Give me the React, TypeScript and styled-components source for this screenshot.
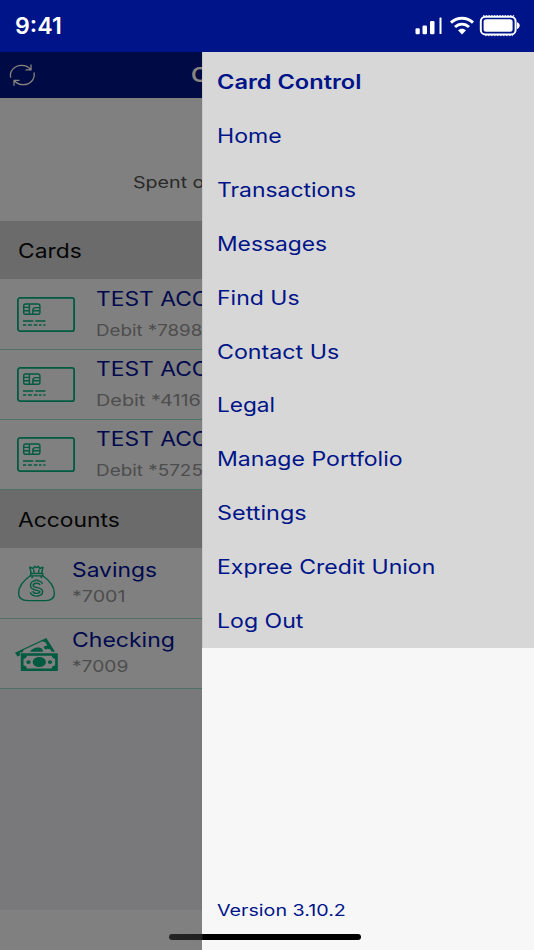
import React from 'react';
import styled, { createGlobalStyle } from 'styled-components';

const GlobalStyle = createGlobalStyle`
  * { box-sizing: border-box; }
  body { margin: 0; font-family: Inter, Roboto, sans-serif; }
`;

const Screen = styled.div`
  position: relative;
  display: flex;
  flex-direction: column;
  width: 534px;
  height: 950px;
  overflow: hidden;
  background: #808080;
`;

const StatusBar = styled.header`
  display: flex;
  align-items: center;
  justify-content: space-between;
  height: 52px;
  flex: none;
  padding: 0 14px 0 15px;
  background: #001489;
`;

const Label = styled.span<{
  $size: number;
  $color: string;
  $stretch?: number;
  $weight?: number;
}>`
  display: block;
  width: max-content;
  white-space: nowrap;
  font-size: ${(p) => p.$size}px;
  line-height: 24px;
  font-weight: ${(p) => p.$weight ?? 400};
  color: ${(p) => p.$color};
  transform: scaleX(${(p) => p.$stretch ?? 1.17});
  transform-origin: left center;
`;

const StatusIcons = styled.svg`
  display: block;
  width: 106px;
  height: 24px;
`;

const Main = styled.div`
  display: flex;
  flex: 1;
  min-height: 0;
`;

const Page = styled.main`
  display: flex;
  flex-direction: column;
  width: 202px;
  flex: none;
  overflow: hidden;
  background: #808080;
`;

const NavBar = styled.div`
  display: flex;
  align-items: center;
  gap: 155px;
  height: 46px;
  flex: none;
  padding-left: 9px;
  background: #000a45;
`;

const RefreshIcon = styled.svg`
  width: 27px;
  height: 24px;
  flex: none;
`;

const Summary = styled.section`
  height: 123px;
  flex: none;
  padding: 72px 0 0 133px;
`;

const SectionHeader = styled.h2`
  display: flex;
  align-items: center;
  margin: 0;
  height: 58px;
  flex: none;
  padding: 2px 0 0 17.5px;
  background: #6b6b6b;
`;

const Row = styled.div<{ $tight?: boolean }>`
  display: flex;
  flex: none;
  height: 70px;
  padding: ${(p) => (p.$tight ? 9 : 7)}px 0 0 ${(p) => (p.$tight ? 15 : 17)}px;
  gap: ${(p) => (p.$tight ? 13 : 21)}px;
  border-bottom: 1px solid #4d7164;

  h2 + & {
    height: 71px;
    padding-top: ${(p) => (p.$tight ? 10 : 8)}px;
  }
`;

const RowText = styled.div<{ $gap: number }>`
  display: flex;
  flex-direction: column;
  gap: ${(p) => p.$gap}px;
`;

const RowIcon = styled.svg<{ $w: number; $top: number; $h: number }>`
  width: ${(p) => p.$w}px;
  height: ${(p) => p.$h}px;
  margin-top: ${(p) => p.$top}px;
  flex: none;
  overflow: visible;
`;

const Filler = styled.div`
  height: 221px;
  flex: none;
  background: #79797b;
`;

const Drawer = styled.aside`
  display: flex;
  flex-direction: column;
  flex: 1;
  background: #f7f7f7;
`;

const Menu = styled.nav`
  display: flex;
  flex-direction: column;
  height: 596px;
  padding: 3px 0 0 14px;
  background: #d7d7d7;
  border-left: 1px solid #c9c9c9;
`;

const MenuItem = styled.a<{ $first?: boolean }>`
  display: flex;
  align-items: center;
  height: ${(p) => (p.$first ? 54.2 : 53.86)}px;
  flex: none;
`;

const Version = styled.div`
  padding: 250px 0 0 15px;
`;

const HomeIndicator = styled.div`
  position: absolute;
  left: 169px;
  bottom: 10px;
  width: 192px;
  height: 6px;
  border-radius: 3px;
  background: linear-gradient(90deg, #242424 0, #202020 33px, #000 34px);
`;

const CardIcon = () => (
  <RowIcon $w={58} $h={35} $top={10} viewBox="0 0 58 35" fill="none" stroke="#005b40">
    <rect x="0.9" y="0.9" width="56.2" height="33.2" rx="2.2" strokeWidth="1.8" />
    <g strokeWidth="1.4">
      <rect x="6.7" y="7" width="16.2" height="10.2" rx="1.8" />
      <path d="M7 10.4h5.4M7 13.8h5.4M12.4 7v10M15.8 17v-3.4c0-1.9.9-3 2.7-3h4.1M16 13.8h6.5" />
    </g>
    <path d="M6 24h10.3M18.3 24h10.2" strokeWidth="1.7" />
    <path d="M6 28h3.2M11 28h3.8M16.8 28h3.6M22 28h2.5M26.3 28h2.2" strokeWidth="1.7" />
  </RowIcon>
);

const MoneyBagIcon = () => (
  <RowIcon $w={44} $h={37} $top={7} viewBox="0 0 44 37" fill="none" stroke="#005b40" strokeWidth="1.4" strokeLinejoin="round">
    <path d="M15.8 10.2C9.5 14.7 3.6 21.5 3.6 28.2c0 5.3 3.6 7.4 9.2 7.4h17.8c5.6 0 8.8-2.4 8.8-7.4 0-7.1-5.8-13.5-12.2-18" />
    <path d="m16.3 8.5-1.6-6.3 3.5 1.3 1.5-2.2 1.8 1.2 1.8-1.2 1.5 2.2 3.1-1.3-1.2 6.3zM15.7 8.5h12v2.4h-12zM18.7 4.5l.5 4M24 4.5l-.5 4M17.7 11l-1 2.2M25.6 11l1.2 2.2" />
    <path d="M26.3 19.4c-.8-1.8-2.5-2.5-4.7-2.5-3 0-4.8 1.3-4.8 3.5 0 5 9.5 2.3 9.5 6.2 0 2.2-2 3.1-4.5 3.1-2.7 0-4.5-.9-5.3-3M21.5 14.5v3M21.5 29.2v2.5" strokeWidth="4" />
    <path d="M26.3 19.4c-.8-1.8-2.5-2.5-4.7-2.5-3 0-4.8 1.3-4.8 3.5 0 5 9.5 2.3 9.5 6.2 0 2.2-2 3.1-4.5 3.1-2.7 0-4.5-.9-5.3-3M21.5 15.5v2M21.5 29.2v1.5" stroke="#808080" strokeWidth="1.3" />
  </RowIcon>
);

const CashIcon = () => (
  <RowIcon $w={44} $h={35} $top={9.5} viewBox="0 0 44 35">
    <path d="M0 14.8 31.3 0 40 13.8h-3.2l-2-2.8c-1.3.3-2.3-.2-2.9-1.2-.7-1.1-.4-2.1.3-2.9l-2-2.9c-1 .3-2 0-2.9-.7L8.5 12.1c.1 1-.5 1.9-1.7 2.4H4.9v3.1l-2.3 1z" fill="#005b40" />
    <path d="M15.2 13.7c1.6-3.8 9.7-5.8 12.3-2.2.6.9.5 1.6.1 2.2z" fill="#005b40" />
    <ellipse cx="31" cy="9.6" rx="2.1" ry="1.8" fill="#005b40" />
    <path d="M5.8 15.3h37v17.8h-37z" fill="#005b40" />
    <path d="M11.8 17.8h25c.2 1.8 1.2 2.8 3.3 3v6.8c-2 .1-3.2 1.2-3.3 3h-25c-.2-1.9-1.3-2.9-3.3-3v-6.8c2.1-.2 3.2-1.2 3.3-3z" fill="#808080" />
    <ellipse cx="24.3" cy="24.1" rx="6.6" ry="5" fill="#005b40" />
    <ellipse cx="13.5" cy="24.1" rx="2.2" ry="1.9" fill="#005b40" />
    <ellipse cx="35" cy="24.1" rx="2.2" ry="1.9" fill="#005b40" />
  </RowIcon>
);

const cards = [
  { digits: '7898', stretch: 1.17 },
  { digits: '4116', stretch: 1.24 },
  { digits: '5725', stretch: 1.18 },
];

const menu = [
  { text: 'Home', stretch: 1.185 },
  { text: 'Transactions', stretch: 1.175 },
  { text: 'Messages', stretch: 1.17 },
  { text: 'Find Us', stretch: 1.18 },
  { text: 'Contact Us', stretch: 1.19 },
  { text: 'Legal', stretch: 1.16 },
  { text: 'Manage Portfolio', stretch: 1.183 },
  { text: 'Settings', stretch: 1.2 },
  { text: 'Expree Credit Union', stretch: 1.182 },
  { text: 'Log Out', stretch: 1.183 },
];

export default function App() {
  return (
    <Screen>
      <GlobalStyle />
      <StatusBar>
        <Label $size={22.5} $weight={600} $color="#fff" $stretch={1.03}>9:41</Label>
        <StatusIcons viewBox="0 0 106 24" fill="#fff">
          <rect x="1.5" y="14.2" width="4.3" height="6" rx="1.2" />
          <rect x="8.5" y="11.5" width="4.5" height="8.7" rx="1.2" />
          <rect x="16" y="7" width="4.5" height="13.2" rx="1.2" />
          <rect x="25.5" y="3.5" width="2" height="16.5" rx=".6" />
          <g fill="none" stroke="#fff" strokeWidth="2.9">
            <path d="M37 8.6c6-5.8 16-5.8 22 0" />
            <path d="M41 13c4-3.9 10-3.9 14 0" />
          </g>
          <path d="M44 16.2c2.2-2.1 5.8-2.1 8 0L48 20.4z" />
          <rect x="66.8" y="2.8" width="34.8" height="17.6" rx="4.5" fill="none" stroke="#fff" strokeWidth="2" />
          <path d="M69 1.8h32" stroke="#fff" strokeWidth="1.2" strokeDasharray="1.5 1.2" />
          <path d="M71 21.6h28" stroke="#fff" strokeWidth=".8" strokeDasharray="1.5 1.5" />
          <rect x="69.6" y="5.2" width="29" height="12.6" rx="2.5" />
          <path d="M103 8.2c3.6.7 3.6 6 0 6.7z" />
        </StatusIcons>
      </StatusBar>
      <Main>
        <Page>
          <NavBar>
            <RefreshIcon viewBox="0 0 27 24" fill="none" stroke="#87857e" strokeWidth="1.3">
              <path d="M1.8 14.7C-.1 7.8 6 2.3 12.5 2.3c4 0 7 1.4 9.2 4.2M22 1.5v5.3h-5.5" />
              <path d="M25 9.5c1.5 7-4.3 12.2-10.6 12.2-4 0-7-1.4-9.1-4.2M5 22.7v-5.4h5.5" />
            </RefreshIcon>
            <Label $size={20} $weight={600} $color="#87857e">Card Control</Label>
          </NavBar>
          <Summary>
            <Label $size={16.5} $color="#292929" $stretch={1.19}>Spent on cards</Label>
          </Summary>
          <SectionHeader>
            <Label $size={19.5} $color="#050505">Cards</Label>
          </SectionHeader>
          {cards.map((c) => (
            <Row key={c.digits}>
              <CardIcon />
              <RowText $gap={7}>
                <Label $size={19.5} $color="#00094f">TEST ACCOUNT</Label>
                <Label $size={16} $color="#4d4d4d" $stretch={c.stretch}>Debit *{c.digits}</Label>
              </RowText>
            </Row>
          ))}
          <SectionHeader>
            <Label $size={19.5} $color="#050505">Accounts</Label>
          </SectionHeader>
          <Row $tight>
            <MoneyBagIcon />
            <RowText $gap={2}>
              <Label $size={20} $color="#00094f" $stretch={1.14}>Savings</Label>
              <Label $size={16} $color="#4d4d4d" $stretch={1.23}>*7001</Label>
            </RowText>
          </Row>
          <Row $tight>
            <CashIcon />
            <RowText $gap={2}>
              <Label $size={20} $color="#00094f" $stretch={1.15}>Checking</Label>
              <Label $size={16} $color="#4d4d4d" $stretch={1.2}>*7009</Label>
            </RowText>
          </Row>
          <Filler />
        </Page>
        <Drawer>
          <Menu>
            <MenuItem $first>
              <Label $size={19.5} $weight={600} $color="#001489" $stretch={1.21}>Card Control</Label>
            </MenuItem>
            {menu.map((m) => (
              <MenuItem key={m.text}>
                <Label $size={19.5} $color="#001489" $stretch={m.stretch}>{m.text}</Label>
              </MenuItem>
            ))}
          </Menu>
          <Version>
            <Label $size={16} $color="#001489" $stretch={1.23}>Version 3.10.2</Label>
          </Version>
        </Drawer>
      </Main>
      <HomeIndicator />
    </Screen>
  );
}
